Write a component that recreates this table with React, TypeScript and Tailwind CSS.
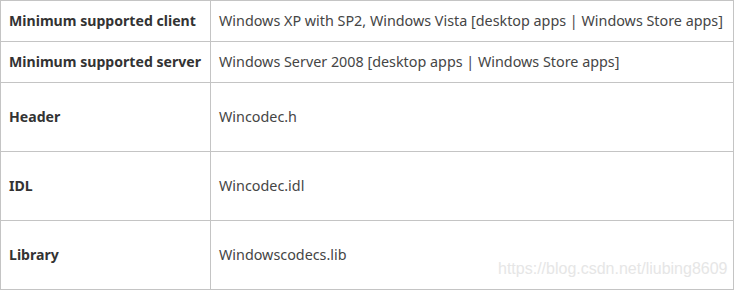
const rows: { label: string; value: string; tall?: boolean }[] = [
  { label: 'Minimum supported client', value: 'Windows XP with SP2, Windows Vista [desktop apps | Windows Store apps]' },
  { label: 'Minimum supported server', value: 'Windows Server 2008 [desktop apps | Windows Store apps]' },
  { label: 'Header', value: 'Wincodec.h', tall: true },
  { label: 'IDL', value: 'Wincodec.idl', tall: true },
  { label: 'Library', value: 'Windowscodecs.lib', tall: true },
]

export default function App() {
  return (
    <div className="relative w-[735px] h-[290px] bg-white font-['Noto_Sans',sans-serif]">
      <table className="w-[734px] border-collapse">
        <tbody>
          {rows.map((r) => (
            <tr key={r.label} className={r.tall ? 'h-[69px]' : 'h-[41px]'}>
              <td className="w-[210px] border border-[#c4c4c4] px-2 text-[14.1px] font-bold text-[#333]">{r.label}</td>
              <td className="border border-[#c4c4c4] px-2 text-[14.35px] text-[#454545]">{r.value}</td>
            </tr>
          ))}
        </tbody>
      </table>
      <div className="absolute left-[498px] top-[257px] font-['Liberation_Sans',sans-serif] text-[16px] text-[#e6e6e6]">
        https://blog.csdn.net/liubing8609
      </div>
    </div>
  )
}
